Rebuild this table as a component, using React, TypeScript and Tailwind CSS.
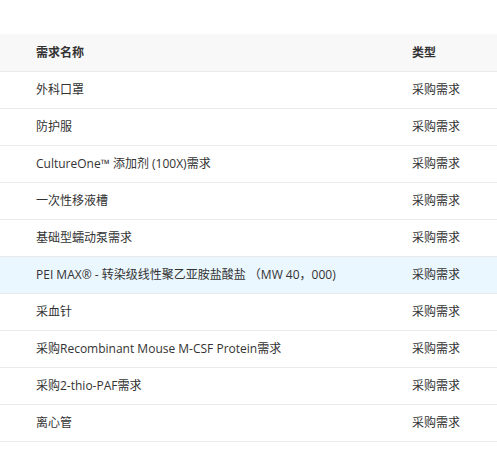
const rows = [
  "外科口罩",
  "防护服",
  "CultureOne™ 添加剂 (100X)需求",
  "一次性移液槽",
  "基础型蠕动泵需求",
  "PEI MAX® - 转染级线性聚乙亚胺盐酸盐 （MW 40，000)",
  "采血针",
  "采购Recombinant Mouse M-CSF Protein需求",
  "采购2-thio-PAF需求",
  "离心管",
];

export default function App() {
  return (
    <div
      className="min-h-[449px] w-full bg-white pt-[34px] text-[12px] text-[#333]"
      style={{ fontFamily: '"Segoe UI", "Open Sans", "Noto Sans CJK SC", sans-serif' }}
    >
      <div className="grid h-[38px] grid-cols-[412px_1fr] items-center border-b border-[#e8eaec] bg-[#f8f8f9] font-bold">
        <div className="pl-[36px]">需求名称</div>
        <div>类型</div>
      </div>
      {rows.map((name, i) => (
        <div
          key={name}
          className={`grid h-[37px] grid-cols-[412px_1fr] items-center border-b border-[#e8eaec] ${
            i === 5 ? "bg-[#ebf7ff]" : "bg-white"
          }`}
        >
          <div className="truncate pl-[36px]">{name}</div>
          <div>采购需求</div>
        </div>
      ))}
    </div>
  );
}
